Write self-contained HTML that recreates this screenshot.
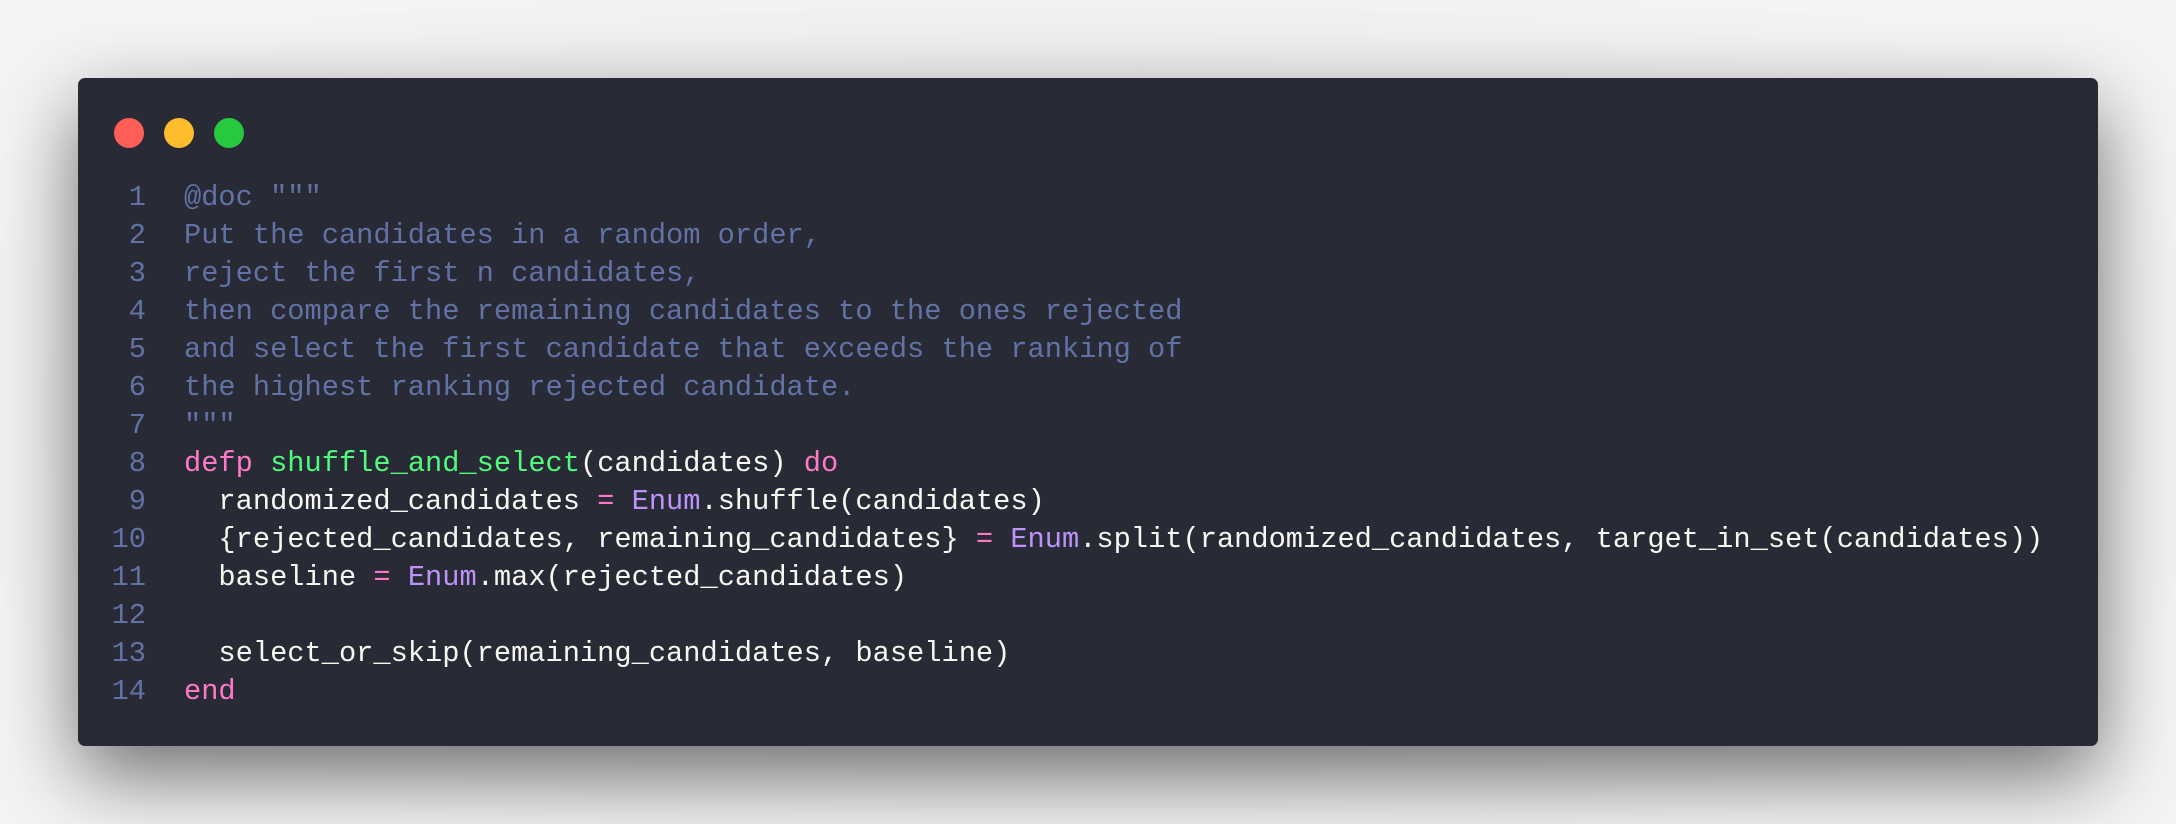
<!DOCTYPE html>
<html><head><meta charset="utf-8"><style>
html,body{margin:0;padding:0;}
body{width:2176px;height:824px;position:relative;overflow:hidden;
background:radial-gradient(ellipse at center,#e4e4e4 0%,#f4f4f4 85%);}
.win{position:absolute;left:78px;top:78px;width:2020px;height:668px;background:#282a36;border-radius:7px;
box-shadow:0 30px 80px rgba(0,0,0,0.55);}
.dot{position:absolute;top:118px;width:30px;height:30px;border-radius:50%;}
.ln,.tx{position:absolute;top:179px;font-family:"Liberation Mono",monospace;font-size:28.7px;line-height:38px;white-space:pre;color:#f8f8f2;margin:0;}
.ln{left:0;width:146px;text-align:right;color:#6272a4;}
.tx{left:184px;}
.c{color:#6272a4}.k{color:#ff79c6}.f{color:#50fa7b}.p{color:#bd93f9}
</style></head><body>
<div class="win"></div>
<div class="dot" style="left:114px;background:#ff5f56"></div>
<div class="dot" style="left:164px;background:#ffbd2e"></div>
<div class="dot" style="left:214px;background:#27c93f"></div>
<div class="ln">1
2
3
4
5
6
7
8
9
10
11
12
13
14</div>
<div class="tx"><span class="c">@doc """
Put the candidates in a random order,
reject the first n candidates,
then compare the remaining candidates to the ones rejected
and select the first candidate that exceeds the ranking of
the highest ranking rejected candidate.
"""</span>
<span class="k">defp</span> <span class="f">shuffle_and_select</span>(candidates) <span class="k">do</span>
  randomized_candidates <span class="k">=</span> <span class="p">Enum</span>.shuffle(candidates)
  {rejected_candidates, remaining_candidates} <span class="k">=</span> <span class="p">Enum</span>.split(randomized_candidates, target_in_set(candidates))
  baseline <span class="k">=</span> <span class="p">Enum</span>.max(rejected_candidates)

  select_or_skip(remaining_candidates, baseline)
<span class="k">end</span></div>
</body></html>
